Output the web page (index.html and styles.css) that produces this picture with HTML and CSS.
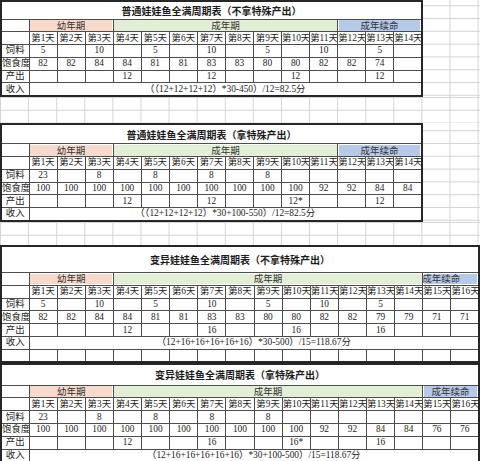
FILE: index.html
```html
<!DOCTYPE html>
<html lang="zh-CN">
<head>
<meta charset="utf-8">
<title>娃娃鱼全满周期表</title>
<link rel="stylesheet" href="styles.css">
</head>
<body>
<div class="page">

<div class="band b1">
<table class="sheet w14">
<colgroup><col class="lc"><col span="14"></colgroup>
<tr class="t1"><td colspan="15" class="tt">普通娃娃鱼全满周期表（不拿特殊产出）</td></tr>
<tr><td></td><td colspan="3" class="ph young">幼年期</td><td colspan="8" class="ph adult">成年期</td><td colspan="3" class="ph ext">成年续命</td></tr>
<tr><td></td><td>第1天</td><td>第2天</td><td>第3天</td><td>第4天</td><td>第5天</td><td>第6天</td><td>第7天</td><td>第8天</td><td>第9天</td><td>第10天</td><td>第11天</td><td>第12天</td><td>第13天</td><td>第14天</td></tr>
<tr><td>饲料</td><td>5</td><td></td><td>10</td><td></td><td>5</td><td></td><td>10</td><td></td><td>5</td><td></td><td>10</td><td></td><td>5</td><td></td></tr>
<tr><td>饱食度</td><td>82</td><td>82</td><td>84</td><td>84</td><td>81</td><td>81</td><td>83</td><td>83</td><td>80</td><td>80</td><td>82</td><td>82</td><td>74</td><td></td></tr>
<tr><td>产出</td><td></td><td></td><td></td><td>12</td><td></td><td></td><td>12</td><td></td><td></td><td>12</td><td></td><td></td><td>12</td><td></td></tr>
<tr><td>收入</td><td colspan="14">（（12+12+12+12）*30-450）/12=82.5分</td></tr>
</table>
</div>

<div class="gap g1"></div>

<div class="band b2">
<table class="sheet w14">
<colgroup><col class="lc"><col span="14"></colgroup>
<tr class="t2"><td colspan="15" class="tt">普通娃娃鱼全满周期表（拿特殊产出）</td></tr>
<tr><td></td><td colspan="3" class="ph young">幼年期</td><td colspan="8" class="ph adult">成年期</td><td colspan="3" class="ph ext">成年续命</td></tr>
<tr><td></td><td>第1天</td><td>第2天</td><td>第3天</td><td>第4天</td><td>第5天</td><td>第6天</td><td>第7天</td><td>第8天</td><td>第9天</td><td>第10天</td><td>第11天</td><td>第12天</td><td>第13天</td><td>第14天</td></tr>
<tr><td>饲料</td><td>23</td><td></td><td>8</td><td></td><td>8</td><td></td><td>8</td><td></td><td>8</td><td></td><td></td><td></td><td></td><td></td></tr>
<tr><td>饱食度</td><td>100</td><td>100</td><td>100</td><td>100</td><td>100</td><td>100</td><td>100</td><td>100</td><td>100</td><td>100</td><td>92</td><td>92</td><td>84</td><td>84</td></tr>
<tr><td>产出</td><td></td><td></td><td></td><td>12</td><td></td><td></td><td>12</td><td></td><td></td><td>12*</td><td></td><td></td><td>12</td><td></td></tr>
<tr><td>收入</td><td colspan="14">（（12+12+12+12）*30+100-550）/12=82.5分</td></tr>
</table>
</div>

<div class="gap g2"></div>

<div class="band b3">
<table class="sheet w16">
<colgroup><col class="lc"><col span="16"></colgroup>
<tr class="t3"><td colspan="17" class="tt">变异娃娃鱼全满周期表（不拿特殊产出）</td></tr>
<tr><td></td><td colspan="3" class="ph young">幼年期</td><td colspan="11" class="ph adult">成年期</td><td colspan="2" class="ph ext shift">成年续命</td></tr>
<tr><td></td><td>第1天</td><td>第2天</td><td>第3天</td><td>第4天</td><td>第5天</td><td>第6天</td><td>第7天</td><td>第8天</td><td>第9天</td><td>第10天</td><td>第11天</td><td>第12天</td><td>第13天</td><td>第14天</td><td>第15天</td><td>第16天</td></tr>
<tr><td>饲料</td><td>5</td><td></td><td>10</td><td></td><td>5</td><td></td><td>10</td><td></td><td>5</td><td></td><td>10</td><td></td><td>5</td><td></td><td></td><td></td></tr>
<tr><td>饱食度</td><td>82</td><td>82</td><td>84</td><td>84</td><td>81</td><td>81</td><td>83</td><td>83</td><td>80</td><td>80</td><td>82</td><td>82</td><td>79</td><td>79</td><td>71</td><td>71</td></tr>
<tr><td>产出</td><td></td><td></td><td></td><td>12</td><td></td><td></td><td>16</td><td></td><td></td><td>16</td><td></td><td></td><td>16</td><td></td><td></td><td></td></tr>
<tr><td>收入</td><td colspan="16">（12+16+16+16+16+16）*30-500）/15=118.67分</td></tr>
<tr><td></td><td></td><td></td><td></td><td></td><td></td><td></td><td></td><td></td><td></td><td></td><td></td><td></td><td></td><td></td><td></td><td></td></tr>
</table>
</div>

<div class="band b4">
<table class="sheet w16">
<colgroup><col class="lc"><col span="16"></colgroup>
<tr class="t4"><td colspan="17" class="tt">变异娃娃鱼全满周期表（拿特殊产出）</td></tr>
<tr><td></td><td colspan="3" class="ph young">幼年期</td><td colspan="11" class="ph adult">成年期</td><td colspan="2" class="ph ext">成年续命</td></tr>
<tr><td></td><td>第1天</td><td>第2天</td><td>第3天</td><td>第4天</td><td>第5天</td><td>第6天</td><td>第7天</td><td>第8天</td><td>第9天</td><td>第10天</td><td>第11天</td><td>第12天</td><td>第13天</td><td>第14天</td><td>第15天</td><td>第16天</td></tr>
<tr><td>饲料</td><td>23</td><td></td><td>8</td><td></td><td>8</td><td></td><td>8</td><td></td><td>8</td><td></td><td></td><td></td><td></td><td></td><td></td><td></td></tr>
<tr><td>饱食度</td><td>100</td><td>100</td><td>100</td><td>100</td><td>100</td><td>100</td><td>100</td><td>100</td><td>100</td><td>100</td><td>92</td><td>92</td><td>84</td><td>84</td><td>76</td><td>76</td></tr>
<tr><td>产出</td><td></td><td></td><td></td><td>12</td><td></td><td></td><td>16</td><td></td><td></td><td>16*</td><td></td><td></td><td>16</td><td></td><td></td><td></td></tr>
<tr><td>收入</td><td colspan="16">（12+16+16+16+16+16）*30+100-500）/15=118.67分</td></tr>
</table>
</div>

<div class="gap g4"></div>
</div>
</body>
</html>
```

FILE: styles.css
```css
html, body {
  margin: 0;
  padding: 0;
  background: #fff;
}

.page {
  width: 480px;
  height: 461px;
  overflow: hidden;
  font-family: "Liberation Serif", "Noto Sans CJK SC", serif;
  color: #222;
}

.band,
.gap {
  display: flex;
  background-color: #fff;
  background-image:
    linear-gradient(to right, #d4d4d4 1px, transparent 1px),
    linear-gradient(to bottom, #d4d4d4 1px, transparent 1px);
  background-size: 28.1px 100%, 100% 12.8px;
}

.b1 { background-position: 0 0, 0 18px; }
.b2 { background-position: 0 0, 0 20px; }
.b3 { background-position: 0 0, 0 27px; }
.b4 { background-position: 0 0, 0 21px; }

.g1 { height: 26px; background-position: 0 0, 0 0; }
.g2 { height: 23px; background-position: 0 0, 0 0; }
.g4 { height: 6px; }

.sheet {
  border-collapse: collapse;
  table-layout: fixed;
  border: 2px solid #262626;
  background: #fff;
}

.w14 { width: 423px; }
.w16 { width: 480px; }

.lc { width: 28px; }

.sheet tr { height: 12.8px; }

.sheet td {
  border: 1px solid #4d4d4d;
  padding: 0;
  height: 11px;
  box-sizing: border-box;
  font-size: 9.4px;
  line-height: 7px;
  text-align: center;
  white-space: nowrap;
  overflow: hidden;
}

.sheet tr.t1, .sheet tr.t1 td { height: 18px; }
.sheet tr.t2, .sheet tr.t2 td { height: 20px; }
.sheet tr.t3, .sheet tr.t3 td { height: 27px; }
.sheet tr.t4, .sheet tr.t4 td { height: 21px; }

.sheet td.tt {
  font-family: "Noto Sans CJK SC", sans-serif;
  font-weight: 700;
  font-size: 10px;
  color: #1c1c1c;
}

.sheet td.ph {
  padding: 1px;
  background-clip: content-box;
  font-family: "Noto Sans CJK SC", sans-serif;
  font-size: 9.5px;
  line-height: 9px;
  color: #333;
}

.young { background-color: #f7dacb; }
.adult { background-color: #e2eed6; }
.ext { background-color: #b6c9e8; }

.sheet td.shift {
  text-align: left;
  text-indent: -3px;
}
```
